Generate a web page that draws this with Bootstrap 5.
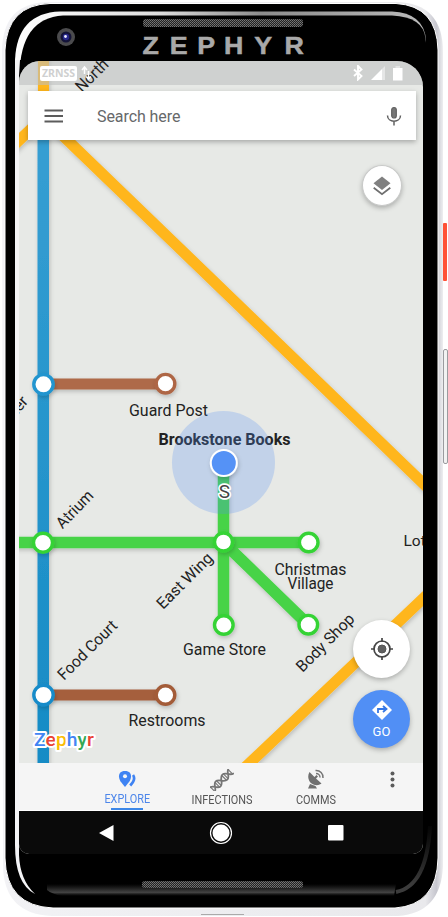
<!DOCTYPE html>
<html lang="en">
<head>
<meta charset="utf-8">
<meta name="viewport" content="width=device-width, initial-scale=1">
<title>Zephyr Maps</title>
<link href="https://cdn.jsdelivr.net/npm/bootstrap@5.3.0/dist/css/bootstrap.min.css" rel="stylesheet">
<style>
body{background:#fff;font-family:Roboto,"Liberation Sans",sans-serif}
.handset{width:448px;height:917px}
.shell{z-index:0}
.bezel-top{height:61px}
.screen{width:404px;height:793px;margin-left:19px;border-radius:21px 26px 10px 10px;background:#e7e9e6;z-index:1}
.map-area{height:702px}
.status{height:24px}
.carrier{background:#fff;color:#cfd0d0;font:700 10.500px/15px "Noto Sans",sans-serif;width:37px;height:15px;border-radius:2px;margin-left:21px;text-align:center}
.search{height:49px;margin:6px 7px 0 9px;background:#fff;box-shadow:0 2px 5px rgba(0,0,0,.28)}
.search-text{font-size:16px;color:#66686a;margin-left:33px;margin-top:2px;letter-spacing:-.08px}
.mic{margin-right:14px}
.fab{width:57px;height:58px;background:#fff;box-shadow:0 2px 5px rgba(0,0,0,.26)}
.fab-sm{width:40px;height:41px;border:1px solid #c8c9c8}
.fab-go{background:#518ff5;color:#fff;font-size:13px;line-height:15px}
.fab-stack{right:13px;top:558.500px;gap:12.500px}
.layer-spot{right:21px;top:104px}
.tabs-bar{height:48px;background:#f5f5f5;border-bottom:1px solid #fff;font-size:12.500px;color:#555}
.tab-item{padding-top:6px;line-height:14px}
.tab-item span{transform:scaleX(.87);margin-top:4px}
.tab-item.on{color:#4d86ea}
.tab-item.on span{margin-top:4px}
.tab-item.on::after{content:"";width:32px;height:2px;background:#3c87e8;margin-top:2px}
.tab-gap{width:61px}.tab-a{width:94px}.tab-b{width:96px}.tab-c{width:91px}
.sys{height:43px;background:#0a0a0a}
svg text{font-family:Roboto,"Liberation Sans",sans-serif}
svg text.brandmark{font-family:"Liberation Sans",sans-serif}
</style>
<script src="https://cdn.jsdelivr.net/npm/bootstrap@5.3.0/dist/js/bootstrap.bundle.min.js"></script>
</head>
<body class="m-0 overflow-hidden">
<div class="handset position-relative overflow-hidden">

<!-- phone body -->
<svg class="shell position-absolute top-0 start-0" width="448" height="917" viewBox="0 0 448 917">
  <defs>
    <linearGradient id="side" x1="0" x2="1"><stop offset="0" stop-color="#f2f2f5"/><stop offset=".96" stop-color="#e9e9ec"/><stop offset=".985" stop-color="#c6c6ce"/><stop offset="1" stop-color="#eeeef0"/></linearGradient>
    <linearGradient id="rim" x1="0" x2="1"><stop offset="0" stop-color="#fff"/><stop offset=".35" stop-color="#dedede"/><stop offset=".6" stop-color="#8c8c8c"/><stop offset="1" stop-color="#bbb"/></linearGradient>
    <linearGradient id="fade" gradientUnits="userSpaceOnUse" x1="0" x2="0" y1="884" y2="896"><stop offset="0" stop-color="#444" stop-opacity="0"/><stop offset=".7" stop-color="#555"/><stop offset="1" stop-color="#333" stop-opacity="0"/></linearGradient>
    <linearGradient id="corner" gradientUnits="userSpaceOnUse" x1="0" x2="0" y1="820" y2="884"><stop offset="0" stop-color="#444" stop-opacity="0"/><stop offset="1" stop-color="#555"/></linearGradient>
    <pattern id="mesh" width="2" height="2" patternUnits="userSpaceOnUse"><rect width="2" height="2" fill="#222"/><rect width="1" height="1" fill="#777"/><rect x="1" y="1" width="1" height="1" fill="#666"/></pattern>
  </defs>
  <rect x="443" y="223" width="4" height="58" rx="1" fill="#ff5136"/>
  <rect x="443.500" y="349.500" width="4" height="114" rx="1.500" fill="#f2f2f2" stroke="#9b9b9f"/>
  <path d="M2 52Q2 2 50 2H396Q443 3 443 52V866Q441 913 398 916H52Q4 914 3 866Z" fill="url(#side)"/>
  <path d="M5 50Q7 5 50 3.500H396Q437 6 438 50V858Q437 905 395 908H53Q6 906 5 858Z" fill="#000" stroke="#fff"/>
  <!-- bright inner rim -->
  <path d="M15 60Q17 13 60 11.500H392Q424 13 426 40V60H15Z" fill="url(#rim)"/>
  <path d="M19.500 76Q20 18 63 15.500H392Q423 17 425.500 38L428 62V90H19.500Z" fill="#000"/>
  <path d="M15 60V845Q15 884 35 894Q20 880 19 855V76L20 60Z" fill="#f4f4f6"/>
  <path d="M47 884H396L394 896H62Q52 894 47 890Z" fill="url(#fade)" opacity=".8"/>
  <path d="M396 892Q427 886 430 826" fill="none" stroke="url(#corner)" stroke-width="4" opacity=".7"/>
  <rect x="143" y="19" width="160" height="8" rx="3" fill="url(#mesh)"/>
  <rect x="142" y="881" width="161" height="7" rx="3" fill="url(#mesh)"/>
  <circle cx="66" cy="37" r="9" fill="#4b4b4d"/><circle cx="66" cy="37" r="5.500" fill="#141438"/><circle cx="66" cy="37" r="3.200" fill="#27278a"/><circle cx="65.500" cy="36.500" r="1.400" fill="#eef"/>
  <text class="brandmark" transform="scale(1.14 1)" font-size="23.500" font-weight="700" fill="#a9a9a9" stroke="#a9a9a9" stroke-width=".5" x="125 149 173 196.500 223 249.500" y="53.800">ZEPHYR</text>
  <path d="M201 914.500H244" stroke="#aaa" stroke-width="1"/>
</svg>

<div class="bezel-top"></div>

<main class="screen position-relative overflow-hidden d-flex flex-column">
  <section class="map-area position-relative overflow-hidden flex-shrink-0">
    <!-- transit map, drawn in handset coordinates -->
    <svg class="position-absolute top-0 start-0" width="404" height="702" viewBox="19 61 404 702">
      <defs>
        <filter id="soft" filterUnits="userSpaceOnUse" x="0" y="40" width="448" height="750"><feDropShadow dx="1" dy="2" stdDeviation="2" flood-opacity=".2"/></filter>
        <linearGradient id="river" x1="0" x2="0" y1="0" y2="1"><stop offset="0" stop-color="#379fd3"/><stop offset="1" stop-color="#158bc5"/></linearGradient>
      </defs>
      <g filter="url(#soft)">
        <path d="M43.500 55V122M10 149L43.500 117L430 490M236 776L430 592" fill="none" stroke="#ffb61e" stroke-width="11"/>
        <rect x="37.500" y="118" width="11.500" height="655" fill="url(#river)"/>
        <path d="M43 384H166" stroke="#ae6a49" stroke-width="11"/>
        <path d="M43 695H166" stroke="#a55f3d" stroke-width="11"/>
        <path d="M10 542.500H308M223.500 463V625M223.500 542.500L308 624.500" fill="none" stroke="#47d347" stroke-width="11.500"/>
      </g>
      <g fill="#fff" stroke-width="3.400" filter="url(#soft)">
        <circle cx="43.500" cy="384.300" r="9.700" stroke="#2295cf"/><circle cx="43.500" cy="695" r="9.700" stroke="#168bc9"/>
        <circle cx="165.500" cy="383.700" r="9.300" stroke="#ae6645"/><circle cx="165.500" cy="695" r="9.300" stroke="#a35b39"/>
        <g stroke="#35d335"><circle cx="43" cy="542.700" r="9.500"/><circle cx="223.500" cy="542" r="9"/><circle cx="308.700" cy="542.500" r="9.300"/><circle cx="223.800" cy="625" r="9.300"/><circle cx="308.300" cy="624.700" r="9.300"/></g>
      </g>
      <rect x="19" y="61" width="404" height="24" fill="#bec0bf" opacity=".58"/>
      <g font-size="16" fill="#222">
        <text x="129" y="416" textLength="79" lengthAdjust="spacingAndGlyphs">Guard Post</text>
        <text x="158.500" y="445" font-weight="700" textLength="132" lengthAdjust="spacingAndGlyphs">Brookstone Books</text>
        <text x="274.500" y="574.500" textLength="72" lengthAdjust="spacingAndGlyphs">Christmas</text>
        <text x="287.500" y="589" textLength="46" lengthAdjust="spacingAndGlyphs">Village</text>
        <text x="183" y="655" textLength="83" lengthAdjust="spacingAndGlyphs">Game Store</text>
        <text x="128.500" y="726" textLength="77" lengthAdjust="spacingAndGlyphs">Restrooms</text>
        <text x="403.500" y="545.500" font-size="15.500">Lotus</text>
        <text transform="translate(62.500 529.500) rotate(-46)" textLength="46" lengthAdjust="spacingAndGlyphs">Atrium</text>
        <text transform="translate(64 681) rotate(-45)" textLength="77" lengthAdjust="spacingAndGlyphs">Food Court</text>
        <text transform="translate(163 610) rotate(-45)" textLength="72" lengthAdjust="spacingAndGlyphs">East Wing</text>
        <text transform="translate(302.500 673) rotate(-45)" textLength="75" lengthAdjust="spacingAndGlyphs">Body Shop</text>
        <text transform="translate(82 93) rotate(-45)" font-size="16.500" textLength="39" lengthAdjust="spacingAndGlyphs">North</text>
        <text transform="translate(29 402) rotate(-48)" text-anchor="end">Theater</text>
      </g>
      <circle cx="223.500" cy="462.500" r="51.500" fill="#528ff5" opacity=".25"/>
      <circle cx="223.800" cy="463" r="13" fill="#5592f6" stroke="#fff" stroke-width="2" filter="url(#soft)"/>
      <text x="224.300" y="498" text-anchor="middle" font-size="19" fill="#444" stroke="#fff" stroke-width="3.500" stroke-linejoin="round" paint-order="stroke">S</text>
      <text x="34" y="745.500" font-size="19" font-weight="500" textLength="60" lengthAdjust="spacingAndGlyphs" stroke="#fff" stroke-width="4" stroke-linejoin="round" paint-order="stroke"><tspan fill="#4285f4">Z</tspan><tspan fill="#ea4335">e</tspan><tspan fill="#fbbc05">p</tspan><tspan fill="#4285f4">h</tspan><tspan fill="#34a853">y</tspan><tspan fill="#ea4335">r</tspan></text>
    </svg>

    <div class="position-relative">
      <div class="status d-flex align-items-center">
        <span class="carrier">ZRNSS</span>
        <svg class="ms-1" width="11" height="16" fill="none" stroke="#fff" stroke-width="1.500"><path d="M3.500 9V2M1 5L3.500 2L6 5M7.500 6V14M5 11.500L7.500 14L10 11.500"/></svg>
        <svg class="ms-auto" width="10" height="16" fill="none" stroke="#fff" stroke-width="1.900"><path d="M1 4.500L8.500 11L5 14.500V1L8.500 4.500L1 11"/></svg>
        <svg class="ms-2" width="14" height="15"><path d="M14 0V14H11V3Z" fill="#e5e6e6"/><path d="M0 14L11 3V14Z" fill="#fff"/></svg>
        <svg class="ms-2" width="10" height="15"><path d="M2.500 0H7V2H2.500Z" fill="#e3e4e4"/><path d="M0 2H9.500V14.500H0Z" fill="#fff"/></svg>
        <i class="pe-3 me-1"></i>
      </div>
      <div class="search d-flex align-items-center">
        <svg class="ms-3" width="20" height="14" stroke="#5c5c5c" stroke-width="1.800"><path d="M.5 1.500H19M.5 7H19M.5 12.500H19"/></svg>
        <span class="search-text">Search here</span>
        <svg class="ms-auto mic" width="16" height="20" fill="none" stroke="#606060" stroke-width="1.500"><rect x="5.700" y="1.500" width="4.600" height="10.500" rx="2.300" fill="#777" stroke-width="1.200"/><path d="M1.500 9.500C1.500 17 14.500 17 14.500 9.500M8 15V19.500"/></svg>
      </div>
    </div>

    <div class="fab fab-sm layer-spot rounded-circle position-absolute d-flex align-items-center justify-content-center">
      <svg width="18" height="20"><path d="M9 .5L17.500 7.200L9 14L.5 7.200Z" fill="#808080"/><path d="M.7 11.700L9 18.200L17.300 11.700" fill="none" stroke="#6f6f6f" stroke-width="1.800"/></svg>
    </div>
    <div class="fab-stack position-absolute d-flex flex-column">
      <div class="fab rounded-circle d-flex align-items-center justify-content-center">
        <svg width="24" height="24" fill="none" stroke="#454545" stroke-width="1.700"><circle cx="12" cy="12" r="8"/><circle cx="12" cy="12" r="4" fill="#606060" stroke="#555" stroke-width="1"/><path d="M12 1V5M12 19V23M1 12H5M19 12H23"/></svg>
      </div>
      <div class="fab fab-go rounded-circle d-flex flex-column align-items-center justify-content-center">
        <svg width="20" height="20"><path d="M10 0L20 10L10 20L0 10Z" fill="#fff"/><path d="M6 13V9H13.500M11 6L14.500 9L11 12" fill="none" stroke="#3577e5" stroke-width="1.800"/></svg>
        <span class="mt-1">GO</span>
      </div>
    </div>
  </section>

  <nav class="tabs-bar d-flex flex-shrink-0">
    <div class="tab-gap"></div>
    <div class="tab-item tab-a on d-flex flex-column align-items-center">
      <svg width="18" height="20"><path d="M7 2C-.5 2 .3 9 2.600 12.500L7 18L11.400 12.500C13.700 9 14.500 2 7 2Z" fill="#3f83f3"/><circle cx="7" cy="7.200" r="2" fill="#f5f5f5"/><path d="M15 6C17.300 9 15.500 13 12.200 16.500" fill="none" stroke="#3f83f3" stroke-width="2.700"/></svg>
      <span>EXPLORE</span>
    </div>
    <div class="tab-item tab-b d-flex flex-column align-items-center">
      <svg width="24" height="22" viewBox="0 0 24 22"><g transform="translate(11.500 11.500) rotate(-45)" fill="none" stroke="#757575" stroke-width="1.800"><path d="M-14 -3.500C-9 -3.500 -9 3.500 -4.700 3.500S0 -3.500 4.700 -3.500S9 3.500 14 3.500M-14 3.500C-9 3.500 -9 -3.500 -4.700 -3.500S0 3.500 4.700 3.500S9 -3.500 14 -3.500"/><path stroke-width="1.100" d="M-12.500 -3V3M-6 -3V3M-3.700 -3V3M3.700 -3V3M6 -3V3M12.500 -3V3"/></g></svg>
      <span class="mt-0 pt-1" style="margin-top:-2px!important">INFECTIONS</span>
    </div>
    <div class="tab-item tab-c d-flex flex-column align-items-center">
      <svg width="18" height="20"><path d="M2.500 3C-.5 8 2 15 8 16C11 16.500 13.500 15.500 14.500 14.500L9 9.500L11 7.500L9.500 6L7.500 8ZM3 15L1 19.500H10L8.500 17Z" fill="#707070"/><path d="M9 4.500C11.500 4.500 13 6.500 13 8.500M8.500 1.500C13 1 16.500 5 16 9" fill="none" stroke="#777" stroke-width="1.500"/></svg>
      <span>COMMS</span>
    </div>
    <div class="ms-auto me-4"><svg class="mt-2 me-1" width="5" height="18" fill="#5b5b5b"><circle cx="2.500" cy="2.500" r="2"/><circle cx="2.500" cy="8.500" r="2"/><circle cx="2.500" cy="14.500" r="2"/></svg></div>
  </nav>

  <div class="sys d-flex align-items-center justify-content-between flex-shrink-0">
    <svg style="margin-left:80px" width="15" height="18"><path d="M14.500 1V17L0 9Z" fill="#fff"/></svg>
    <svg width="24" height="24"><circle cx="12" cy="12" r="10.500" fill="none" stroke="#fff" stroke-width="1.200"/><circle cx="12" cy="12" r="8.500" fill="#fff"/></svg>
    <svg style="margin-right:79px" width="16" height="16"><rect width="15.500" height="15.500" rx="1" fill="#fff"/></svg>
  </div>
</main>
</div>
</body>
</html>
